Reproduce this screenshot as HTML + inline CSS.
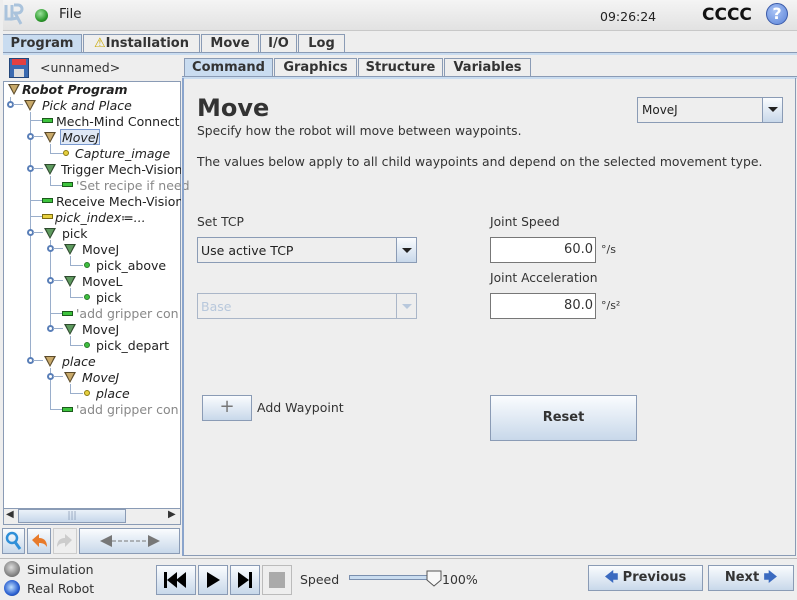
<!DOCTYPE html><html><head><meta charset="utf-8"><style>
*{box-sizing:border-box;margin:0;padding:0}
body{width:797px;height:600px;overflow:hidden;background:#eeeeee;font-family:"DejaVu Sans","Liberation Sans",sans-serif;font-size:12px;color:#333;position:relative}
.a{position:absolute;white-space:nowrap}
.tab{position:absolute;height:19px;border:1px solid #8a9bb5;border-bottom:none;background:#eeeeee;font-weight:bold;font-size:13px;text-align:center;line-height:18px;color:#333}
.tab.on{background:#c9dcf0}
.btn{position:absolute;border:1px solid #8a9bb5;background:linear-gradient(#fafcfe,#c8d8ea)}
.tri{position:absolute;width:0;height:0;border-left:6px solid transparent;border-right:6px solid transparent;border-top:11px solid #5b4a2a}
.tri::after{content:"";position:absolute;left:-4px;top:-10px;border-left:4px solid transparent;border-right:4px solid transparent;border-top:8px solid #c8a96a}
.tri.g::after{border-top-color:#5e9a5e}
.tri.g{border-top-color:#2f4a2f}
.tr{position:absolute;font-size:12.5px;white-space:nowrap;color:#222}
.ln{position:absolute;background:#9aaecb}
.bar{position:absolute;width:11px;height:5px;background:#3ec43e;border:1px solid #1c5a1c}
.bar.y{background:#e6cf3f;border-color:#7a6a10}
.dot{position:absolute;width:6px;height:6px;border-radius:3px;background:#3fbf3f;border:1px solid #2a7a2a}
.dot.y{background:#e6cf3f;border-color:#8a7a10}
.pin{position:absolute;width:7px;height:7px;border:2px solid #5a7fb8;border-radius:4px;background:#fff}
</style></head><body>
<div class="a" style="left:0;top:0;width:797px;height:31px;background:linear-gradient(#f4f4f4,#e2e2e2);border-bottom:1px solid #c8c8c8"></div>
<svg class="a" style="left:3px;top:3px" width="22" height="24"><path d="M3 2v14h6M9 2v14l6-1M11 2h4a4 4 0 0 1 0 8h-3l6 11" stroke="#aac3dc" stroke-width="3" fill="none"/></svg>
<div class="a" style="left:35px;top:9px;width:13px;height:13px;border-radius:7px;background:radial-gradient(circle at 40% 35%,#9be29b,#2d9a2d 60%,#145a14)"></div>
<div class="a" style="left:59px;top:6px;font-size:13.5px;color:#222">File</div>
<div class="a" style="left:600px;top:9px;font-size:12.5px;color:#222">09:26:24</div>
<div class="a" style="left:702px;top:5px;font-size:17px;font-weight:bold;color:#111">CCCC</div>
<div class="a" style="left:766px;top:3px;width:22px;height:22px;border-radius:11px;background:radial-gradient(circle at 40% 35%,#a9c3f5,#5a83d8);border:1px solid #3a5aa8;color:#fff;font-weight:bold;font-size:16px;text-align:center;line-height:20px">?</div>
<div class="tab on" style="left:2px;top:34px;width:80px">Program</div>
<div class="tab" style="left:83px;top:34px;width:117px"><span style="color:#c9a800">⚠</span>Installation</div>
<div class="tab" style="left:201px;top:34px;width:58px">Move</div>
<div class="tab" style="left:260px;top:34px;width:37px">I/O</div>
<div class="tab" style="left:298px;top:34px;width:47px">Log</div>
<div class="a" style="left:0;top:52px;width:797px;height:3px;background:#c9dcf0;border-top:1px solid #8a9bb5"></div>
<div class="a" style="left:9px;top:58px;width:20px;height:20px;background:#3a6ab0;border:1px solid #23467a"><div style="position:absolute;left:2px;top:0;width:14px;height:6px;background:#e24040"></div><div style="position:absolute;left:4px;top:10px;width:10px;height:8px;background:#ddd"></div></div>
<div class="a" style="left:40px;top:60px;font-size:12.5px;color:#333">&lt;unnamed&gt;</div>
<div class="a" style="left:3px;top:81px;width:178px;height:444px;background:#fff;border:1px solid #8a9bb5"></div>
<div class="tri" style="left:8px;top:84px"></div><div class="tr" style="left:22px;top:82px;font-weight:bold;font-style:italic">Robot Program</div>
<div class="ln" style="left:10px;top:97px;width:1px;height:6px"></div>
<div class="pin" style="left:7px;top:101px"></div><div class="ln" style="left:13px;top:104px;width:10px;height:1px"></div>
<div class="tri" style="left:24px;top:100px"></div><div class="tr" style="left:42px;top:98px;font-style:italic">Pick and Place</div>
<div class="ln" style="left:30px;top:112px;width:1px;height:246px"></div>
<div class="ln" style="left:30px;top:120px;width:12px;height:1px"></div><div class="bar" style="left:42px;top:118px"></div><div class="tr" style="left:56px;top:114px">Mech-Mind Connect</div>
<div class="pin" style="left:27px;top:133px"></div><div class="ln" style="left:33px;top:136px;width:10px;height:1px"></div>
<div class="tri" style="left:44px;top:132px"></div><div class="a" style="left:60px;top:129px;width:40px;height:16px;border:1px solid #7a9ad0;background:#dfe8f6"></div><div class="tr" style="left:62px;top:130px;font-style:italic">MoveJ</div>
<div class="ln" style="left:50px;top:144px;width:1px;height:9px"></div><div class="ln" style="left:50px;top:153px;width:13px;height:1px"></div><div class="dot y" style="left:63px;top:150px"></div><div class="tr" style="left:75px;top:146px;font-style:italic">Capture_image</div>
<div class="pin" style="left:27px;top:165px"></div><div class="ln" style="left:33px;top:168px;width:10px;height:1px"></div>
<div class="tri g" style="left:44px;top:164px"></div><div class="tr" style="left:61px;top:162px">Trigger Mech-Vision</div>
<div class="ln" style="left:50px;top:176px;width:1px;height:9px"></div><div class="ln" style="left:50px;top:185px;width:12px;height:1px"></div><div class="bar" style="left:62px;top:182px"></div><div class="tr" style="left:76px;top:178px;color:#888">'Set recipe if need</div>
<div class="ln" style="left:30px;top:200px;width:12px;height:1px"></div><div class="bar" style="left:42px;top:198px"></div><div class="tr" style="left:56px;top:194px">Receive Mech-Vision</div>
<div class="ln" style="left:30px;top:216px;width:12px;height:1px"></div><div class="bar y" style="left:42px;top:214px"></div><div class="tr" style="left:55px;top:210px;font-style:italic">pick_index≔...</div>
<div class="pin" style="left:27px;top:229px"></div><div class="ln" style="left:33px;top:232px;width:10px;height:1px"></div>
<div class="tri g" style="left:44px;top:228px"></div><div class="tr" style="left:62px;top:226px">pick</div>
<div class="ln" style="left:50px;top:240px;width:1px;height:88px"></div>
<div class="pin" style="left:47px;top:245px"></div><div class="ln" style="left:53px;top:248px;width:10px;height:1px"></div>
<div class="tri g" style="left:64px;top:244px"></div><div class="tr" style="left:82px;top:242px">MoveJ</div>
<div class="ln" style="left:70px;top:256px;width:1px;height:9px"></div><div class="ln" style="left:70px;top:265px;width:13px;height:1px"></div><div class="dot" style="left:84px;top:262px"></div><div class="tr" style="left:96px;top:258px">pick_above</div>
<div class="pin" style="left:47px;top:277px"></div><div class="ln" style="left:53px;top:280px;width:10px;height:1px"></div>
<div class="tri g" style="left:64px;top:276px"></div><div class="tr" style="left:82px;top:274px">MoveL</div>
<div class="ln" style="left:70px;top:288px;width:1px;height:9px"></div><div class="ln" style="left:70px;top:297px;width:13px;height:1px"></div><div class="dot" style="left:84px;top:294px"></div><div class="tr" style="left:96px;top:290px">pick</div>
<div class="ln" style="left:50px;top:313px;width:12px;height:1px"></div><div class="bar" style="left:62px;top:311px"></div><div class="tr" style="left:76px;top:306px;color:#888">'add gripper con</div>
<div class="pin" style="left:47px;top:325px"></div><div class="ln" style="left:53px;top:328px;width:10px;height:1px"></div>
<div class="tri g" style="left:64px;top:324px"></div><div class="tr" style="left:82px;top:322px">MoveJ</div>
<div class="ln" style="left:70px;top:336px;width:1px;height:9px"></div><div class="ln" style="left:70px;top:345px;width:13px;height:1px"></div><div class="dot" style="left:84px;top:342px"></div><div class="tr" style="left:96px;top:338px">pick_depart</div>
<div class="pin" style="left:27px;top:357px"></div><div class="ln" style="left:33px;top:360px;width:10px;height:1px"></div>
<div class="tri" style="left:44px;top:356px"></div><div class="tr" style="left:62px;top:354px;font-style:italic">place</div>
<div class="ln" style="left:50px;top:368px;width:1px;height:42px"></div>
<div class="pin" style="left:47px;top:373px"></div><div class="ln" style="left:53px;top:376px;width:10px;height:1px"></div>
<div class="tri" style="left:64px;top:372px"></div><div class="tr" style="left:82px;top:370px;font-style:italic">MoveJ</div>
<div class="ln" style="left:70px;top:384px;width:1px;height:9px"></div><div class="ln" style="left:70px;top:393px;width:13px;height:1px"></div><div class="dot y" style="left:84px;top:390px"></div><div class="tr" style="left:96px;top:386px;font-style:italic">place</div>
<div class="ln" style="left:50px;top:409px;width:12px;height:1px"></div><div class="bar" style="left:62px;top:407px"></div><div class="tr" style="left:76px;top:402px;color:#888">'add gripper con</div>
<div class="a" style="left:0;top:0;width:3px;height:600px;background:#eee"></div>
<div class="a" style="left:181px;top:81px;width:2px;height:444px;background:#eee"></div>
<div class="a" style="left:4px;top:508px;width:176px;height:16px;background:#eee;border-top:1px solid #8a9bb5"></div>
<div class="a" style="left:6px;top:509px;font-size:10px">◀</div>
<div class="a" style="left:18px;top:509px;width:108px;height:14px;border:1px solid #8a9bb5;background:linear-gradient(#eaf1f9,#c6d7ea);text-align:center;font-size:9px;line-height:12px;color:#8a9bb5">|||</div>
<div class="a" style="left:168px;top:509px;font-size:10px">▶</div>
<div class="btn" style="left:2px;top:528px;width:23px;height:26px"><svg width="21" height="24"><circle cx="9" cy="9" r="5" stroke="#2f8fd8" stroke-width="2.5" fill="none"/><path d="M12 13l5 7" stroke="#2f8fd8" stroke-width="3"/></svg></div>
<div class="btn" style="left:27px;top:528px;width:24px;height:26px"><svg width="22" height="24"><path d="M4 11l7-6v4c6 0 8 4 8 9-2-3-4-4-8-4v4z" fill="#e87a2a"/></svg></div>
<div class="btn" style="left:53px;top:528px;width:24px;height:26px;background:#eee;border-color:#ccc"><svg width="22" height="24"><path d="M18 11l-7-6v4c-6 0-8 4-8 9 2-3 4-4 8-4v4z" fill="#ccc"/></svg></div>
<div class="btn" style="left:79px;top:528px;width:101px;height:26px"><svg width="99" height="24"><path d="M20 12l12-6v12zM80 12l-12-6v12z" fill="#777"/><path d="M32 12h36" stroke="#777" stroke-dasharray="4 2"/></svg></div>
<div class="tab on" style="left:184px;top:58px;width:89px">Command</div>
<div class="tab" style="left:274px;top:58px;width:83px">Graphics</div>
<div class="tab" style="left:358px;top:58px;width:85px">Structure</div>
<div class="tab" style="left:444px;top:58px;width:87px">Variables</div>
<div class="a" style="left:182px;top:76px;width:615px;height:3px;background:#c9dcf0;border-top:1px solid #8a9bb5"></div>
<div class="a" style="left:182px;top:78px;width:614px;height:478px;border:1px solid #8a9bb5;border-top:none;border-left:2px solid #8aa4cc"></div>
<div class="a" style="left:197px;top:94px;font-size:24px;font-weight:bold;color:#333">Move</div>
<div class="a" style="left:197px;top:124px;font-size:12.3px">Specify how the robot will move between waypoints.</div>
<div class="a" style="left:197px;top:154px;font-size:12.4px">The values below apply to all child waypoints and depend on the selected movement type.</div>
<div class="a" style="left:637px;top:97px;width:146px;height:26px;border:1px solid #8a9bb5;background:#eee"><div style="position:absolute;left:4px;top:5px;font-size:12px;color:#222">MoveJ</div><div style="position:absolute;right:0;top:0;width:20px;height:24px;border-left:1px solid #8a9bb5;background:linear-gradient(#fafcfe,#c8d8ea)"><div style="position:absolute;left:5px;top:9px;border-left:5px solid transparent;border-right:5px solid transparent;border-top:5px solid #222"></div></div></div>
<div class="a" style="left:197px;top:215px;font-size:12.3px">Set TCP</div>
<div class="a" style="left:197px;top:237px;width:220px;height:26px;border:1px solid #8a9bb5;background:#eee"><div style="position:absolute;left:3px;top:5px;font-size:12.5px;color:#222">Use active TCP</div><div style="position:absolute;right:0;top:0;width:20px;height:24px;border-left:1px solid #8a9bb5;background:linear-gradient(#fafcfe,#c8d8ea)"><div style="position:absolute;left:5px;top:10px;border-left:5px solid transparent;border-right:5px solid transparent;border-top:5px solid #222"></div></div></div>
<div class="a" style="left:197px;top:293px;width:220px;height:26px;border:1px solid #aab6c8;background:#eee"><div style="position:absolute;left:3px;top:5px;font-size:12.5px;color:#b8c8dc">Base</div><div style="position:absolute;right:0;top:0;width:20px;height:24px;border-left:1px solid #aab6c8"><div style="position:absolute;left:5px;top:10px;border-left:5px solid transparent;border-right:5px solid transparent;border-top:5px solid #b8c8dc"></div></div></div>
<div class="a" style="left:490px;top:215px;font-size:12.3px">Joint Speed</div>
<div class="a" style="left:490px;top:237px;width:106px;height:26px;border:1px solid #777;background:#fff;text-align:right;padding-right:2px;line-height:24px;font-size:13px">60.0</div>
<div class="a" style="left:601px;top:243px;font-size:11px">°/s</div>
<div class="a" style="left:490px;top:271px;font-size:12.3px">Joint Acceleration</div>
<div class="a" style="left:490px;top:293px;width:106px;height:26px;border:1px solid #777;background:#fff;text-align:right;padding-right:2px;line-height:24px;font-size:13px">80.0</div>
<div class="a" style="left:601px;top:299px;font-size:11px">°/s²</div>
<div class="btn" style="left:202px;top:395px;width:50px;height:26px;text-align:center;line-height:22px;font-size:18px;color:#777">+</div>
<div class="a" style="left:257px;top:400px;font-size:12.5px">Add Waypoint</div>
<div class="btn" style="left:490px;top:395px;width:147px;height:46px;text-align:center;line-height:44px;font-weight:bold;font-size:13px">Reset</div>
<div class="a" style="left:0;top:558px;width:797px;height:1px;background:#bbb"></div>
<div class="a" style="left:4px;top:561px;width:16px;height:16px;border-radius:8px;background:radial-gradient(circle at 45% 40%,#ddd,#777 70%,#444)"></div>
<div class="a" style="left:27px;top:562px;font-size:12.5px">Simulation</div>
<div class="a" style="left:4px;top:580px;width:16px;height:16px;border-radius:8px;background:radial-gradient(circle at 45% 45%,#bfe0ff,#2a5fd0 60%,#122a60)"></div>
<div class="a" style="left:27px;top:581px;font-size:12.5px">Real Robot</div>
<div class="btn" style="left:156px;top:565px;width:40px;height:30px"><svg width="38" height="28"><path d="M7 6h3v16H7zM10 14l10-8v16zM19 14l10-8v16z" fill="#000"/></svg></div>
<div class="btn" style="left:198px;top:565px;width:30px;height:30px"><svg width="28" height="28"><path d="M8 6l13 8-13 8z" fill="#000"/></svg></div>
<div class="btn" style="left:230px;top:565px;width:30px;height:30px"><svg width="28" height="28"><path d="M7 6l11 8-11 8zM18 6h3v16h-3z" fill="#000"/></svg></div>
<div class="a" style="left:262px;top:565px;width:30px;height:30px;border:1px solid #bbb;background:#eee"><div style="position:absolute;left:6px;top:6px;width:16px;height:16px;background:#aaa"></div></div>
<div class="a" style="left:300px;top:572px;font-size:12.5px">Speed</div>
<div class="a" style="left:349px;top:575px;width:86px;height:5px;border:1px solid #7a8fae;background:#c9dcf0"></div>
<svg class="a" style="left:425px;top:569px" width="20" height="18"><path d="M2 2h14v9l-7 6-7-6z" fill="#f8f8f8" stroke="#555"/></svg>
<div class="a" style="left:442px;top:572px;font-size:12.5px">100%</div>
<div class="btn" style="left:588px;top:565px;width:115px;height:26px;text-align:center;line-height:24px;font-weight:bold;font-size:13px"><span style="color:#3a6ac0">🡄</span> Previous</div>
<div class="btn" style="left:708px;top:565px;width:86px;height:26px;text-align:center;line-height:24px;font-weight:bold;font-size:13px">Next <span style="color:#3a6ac0">🡆</span></div>
</body></html>
